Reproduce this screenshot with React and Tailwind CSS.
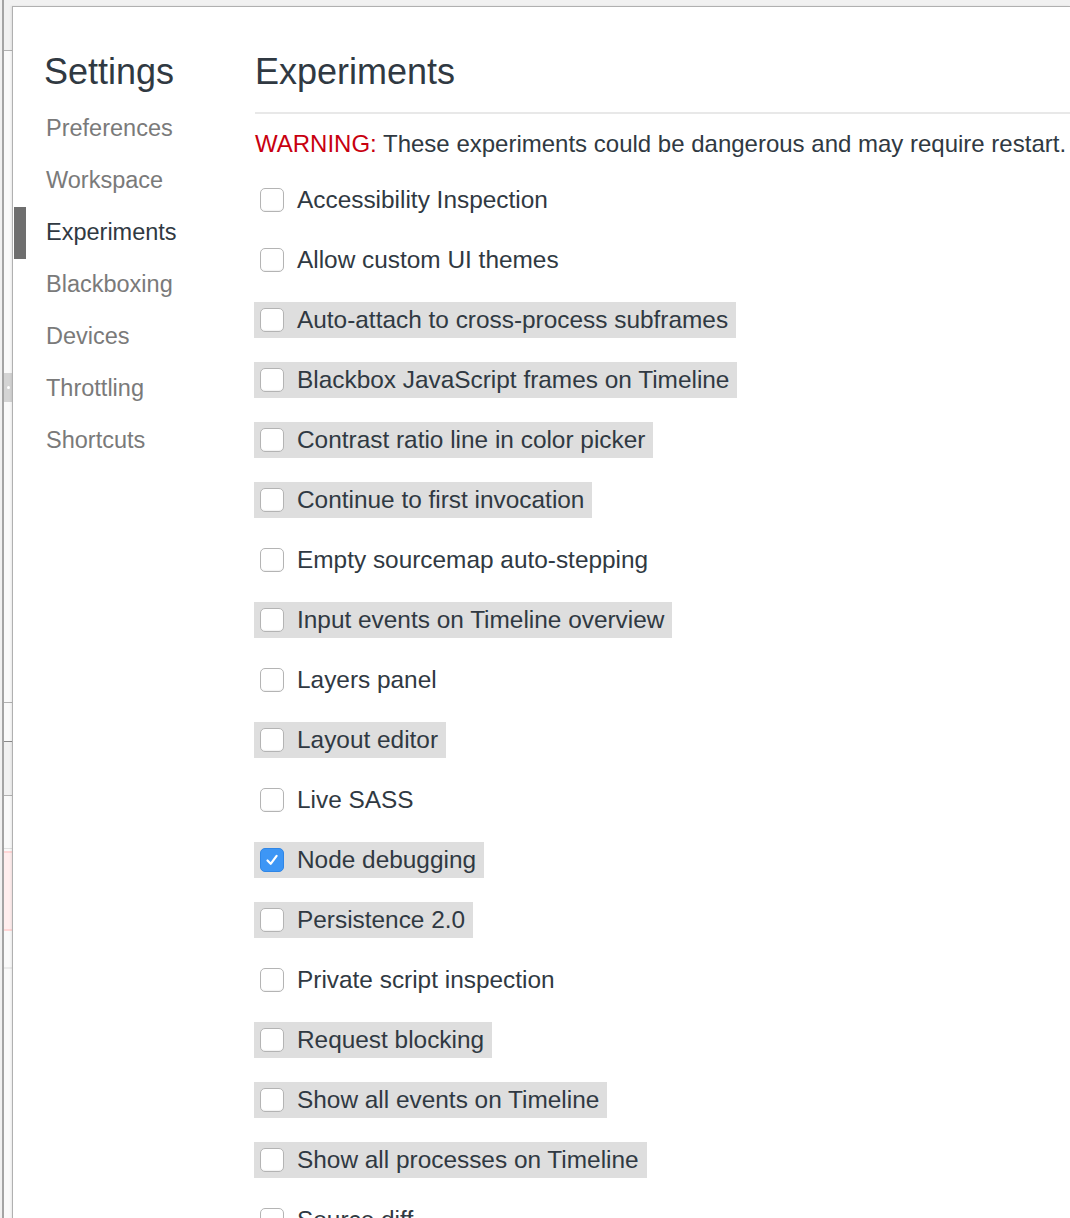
import React from "react";

const NAV = ["Preferences", "Workspace", "Experiments", "Blackboxing", "Devices", "Throttling", "Shortcuts"];

const EXPERIMENTS = [
  { label: "Accessibility Inspection" },
  { label: "Allow custom UI themes" },
  { label: "Auto-attach to cross-process subframes", hidden: true },
  { label: "Blackbox JavaScript frames on Timeline", hidden: true },
  { label: "Contrast ratio line in color picker", hidden: true },
  { label: "Continue to first invocation", hidden: true },
  { label: "Empty sourcemap auto-stepping" },
  { label: "Input events on Timeline overview", hidden: true },
  { label: "Layers panel" },
  { label: "Layout editor", hidden: true },
  { label: "Live SASS" },
  { label: "Node debugging", hidden: true, checked: true },
  { label: "Persistence 2.0", hidden: true },
  { label: "Private script inspection" },
  { label: "Request blocking", hidden: true },
  { label: "Show all events on Timeline", hidden: true },
  { label: "Show all processes on Timeline", hidden: true },
  { label: "Source diff" },
];

const Checkbox = ({ checked }) =>
  checked ? (
    <span className="w-[24px] h-[24px] shrink-0 rounded-[5px] bg-[#3d96f5] border border-[#2f86e6] flex items-center justify-center">
      <svg width="16" height="16" viewBox="0 0 16 16" fill="none">
        <path d="M3.5 8.5 L6.7 11.8 L12.6 3.8" stroke="white" strokeWidth="2.2" strokeLinecap="round" strokeLinejoin="round" />
      </svg>
    </span>
  ) : (
    <span className="w-[24px] h-[24px] shrink-0 rounded-[5px] bg-white border border-[#b4b4b4] shadow-[inset_0_-1px_1px_rgba(0,0,0,0.06)]" />
  );

// the panel behind the dialog, only its left sliver shows
const BackStrip = () => (
  <div className="w-[12px] shrink-0 flex h-full">
    <div className="w-[2px] bg-[#f1f1f1]" />
    <div className="w-[2px] bg-[#a4a4a4]" />
    <div className="w-[8px] flex flex-col">
      <div className="h-[50px] bg-[#f1f1f1]" />
      <div className="h-[1px] bg-[#b2b2b2]" />
      <div className="h-[322px] bg-[#fafafa]" />
      <div className="h-[29px] bg-[#d4d4d4] flex items-center justify-center">
        <span className="w-[3px] h-[3px] rounded-full bg-white" />
      </div>
      <div className="h-[300px] bg-[#fafafa]" />
      <div className="h-[1px] bg-[#b2b2b2]" />
      <div className="h-[38px] bg-[#fafafa]" />
      <div className="h-[1px] bg-[#8a8a8a]" />
      <div className="h-[53px] bg-[#f1f1f1]" />
      <div className="h-[1px] bg-[#b2b2b2]" />
      <div className="h-[52px] bg-[#fafafa]" />
      <div className="h-[1px] bg-[#e0e0e0]" />
      <div className="h-[2px] bg-[#fafafa]" />
      <div className="h-[2px] bg-[#ffd6d6]" />
      <div className="h-[76px] bg-[#ffeeee]" />
      <div className="h-[2px] bg-[#ffd6d6]" />
      <div className="h-[36px] bg-[#fafafa]" />
      <div className="h-[2px] bg-[#ebebeb]" />
      <div className="flex-1 bg-[#fafafa]" />
    </div>
  </div>
);

export default function App() {
  return (
    <div className="w-[1070px] h-[1218px] overflow-hidden flex bg-[#f1f1f1] font-['Liberation_Sans',Arial,sans-serif]">
      <BackStrip />
      <div className="flex-1 flex flex-col">
        <div className="h-[6px] shrink-0 bg-[#f1f1f1]" />
        <div className="flex-1 flex bg-white border-l border-t border-[#b0b0b0] shadow-[-1px_0_2px_rgba(0,0,0,0.08)]">
          <div className="w-[242px] shrink-0 pt-[47px]">
            <div className="pl-[31px] text-[36px] leading-[36px] text-[#303942]">Settings</div>
            <div className="mt-[13px] flex flex-col">
              {NAV.map((item) => {
                const selected = item === "Experiments";
                return (
                  <div key={item} className="h-[52px] flex items-center">
                    <div className={`w-[12px] h-full ml-[1px] ${selected ? "bg-[#6e6e6e]" : ""}`} />
                    <span className={`ml-[20px] text-[23.5px] ${selected ? "text-[#303942]" : "text-[#7a7a7a]"}`}>
                      {item}
                    </span>
                  </div>
                );
              })}
            </div>
          </div>

          <div className="flex-1 pt-[47px] min-w-0">
            <div className="text-[36px] leading-[36px] text-[#303942] pb-[22px] border-b-2 border-[#e8e8e8] whitespace-nowrap">
              Experiments
            </div>
            <div className="mt-[12px] text-[24px] leading-[36px] text-[#303942] whitespace-nowrap">
              <span className="text-[#c8000f]">WARNING:</span> These experiments could be dangerous and may require restart.
            </div>
            <div className="mt-[8px] flex flex-col">
              {EXPERIMENTS.map((exp) => (
                <div key={exp.label} className="h-[60px] flex items-center">
                  <div
                    className={`h-[36px] flex items-center pl-[6px] pr-[8px] -ml-[1px] ${exp.hidden ? "bg-[#dedede]" : ""}`}
                  >
                    <Checkbox checked={exp.checked} />
                    <span className="ml-[13px] text-[24.4px] text-[#303942] whitespace-nowrap">{exp.label}</span>
                  </div>
                </div>
              ))}
            </div>
          </div>
        </div>
      </div>
    </div>
  );
}
